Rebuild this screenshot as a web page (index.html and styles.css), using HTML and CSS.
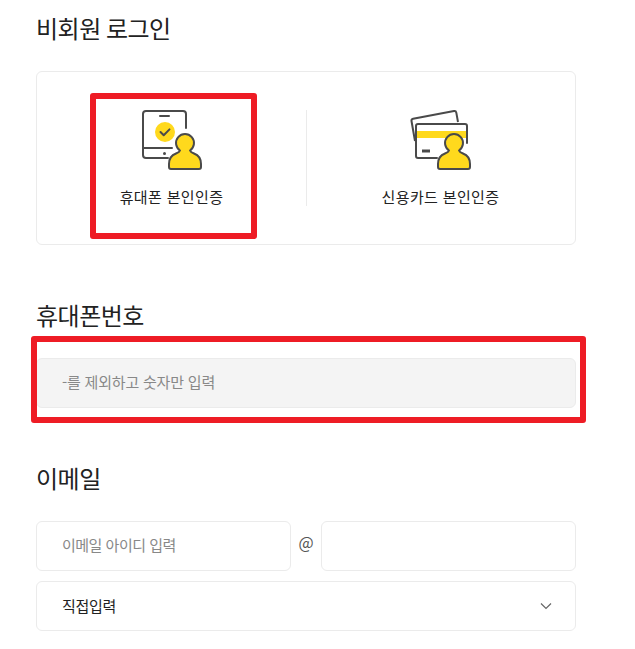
FILE: index.html
```html
<!DOCTYPE html>
<html lang="ko">
  <head>
    <meta charset="UTF-8" />
    <meta name="viewport" content="width=device-width, initial-scale=1.0" />
    <title>비회원 로그인</title>
    <link rel="stylesheet" href="styles.css">
  </head>
  <body>
    <div class="container">
      <h2 class="title title-login">비회원 로그인</h2>
      <div class="auth-card">
        <div class="auth-item">
          <svg class="auth-icon" width="64" height="64" viewBox="0 0 64 64" fill="none">
            <path d="M45 19V5a3 3 0 0 0-3-3H5a3 3 0 0 0-3 3v41a3 3 0 0 0 3 3h22M2 39h29M19 7h9" stroke="#4a4a4a" stroke-width="2" stroke-linecap="round"/>
            <circle cx="24" cy="23" r="10" fill="#ffd91d"/>
            <path d="M19.500 23l3.200 3.200 5.800-5.800" stroke="#4a4a4a" stroke-width="2" stroke-linecap="round" stroke-linejoin="round"/>
            <circle cx="23.500" cy="44.500" r="1.500" fill="#4a4a4a"/>
            <path d="M28 58v-3c0-6 3-9 7-10.500 2-.8 3.500-1.500 4-3A9 9 0 1 1 49 41.500c.5 1.500 2 2.200 4 3 4 1.500 7 4.500 7 10.500v3a2 2 0 0 1-2 2H30a2 2 0 0 1-2-2z" fill="#ffd91d" stroke="#4a4a4a" stroke-width="2" stroke-linejoin="round"/>
          </svg>
          <span class="auth-label">휴대폰 본인인증</span>
        </div>
        <div class="auth-item auth-item-card">
          <svg class="auth-icon" width="64" height="64" viewBox="0 0 64 64" fill="none">
            <path d="M5 32L1.500 12a2 2 0 0 1 1.600-2.300L44 2a2 2 0 0 1 2.300 1.600L48 13" stroke="#4a4a4a" stroke-width="2" stroke-linejoin="round"/>
            <rect x="6" y="22" width="51" height="7" fill="#ffd91d"/>
            <path d="M27 49H8a2 2 0 0 1-2-2V17a2 2 0 0 1 2-2h47a2 2 0 0 1 2 2v17" stroke="#4a4a4a" stroke-width="2" stroke-linecap="round"/>
            <path d="M12 42h8" stroke="#4a4a4a" stroke-width="3"/>
            <path d="M28 58v-3c0-6 3-9 7-10.500 2-.8 3.500-1.500 4-3A9 9 0 1 1 49 41.500c.5 1.500 2 2.200 4 3 4 1.500 7 4.500 7 10.500v3a2 2 0 0 1-2 2H30a2 2 0 0 1-2-2z" fill="#ffd91d" stroke="#4a4a4a" stroke-width="2" stroke-linejoin="round"/>
          </svg>
          <span class="auth-label">신용카드 본인인증</span>
        </div>
        <div class="mark mark-phone"></div>
      </div>

      <div class="phone-field">
        <h2 class="title title-phone">휴대폰번호</h2>
        <div class="field field-gray">-를 제외하고 숫자만 입력</div>
        <div class="mark mark-input"></div>
      </div>

      <h2 class="title title-email">이메일</h2>
      <div class="email-row">
        <div class="field">이메일 아이디 입력</div>
        <span class="at">@</span>
        <div class="field"></div>
      </div>
      <div class="field field-select">
        <span>직접입력</span>
        <svg width="12" height="8" viewBox="0 0 12 8" fill="none">
          <path d="M1 1.500l5 5 5-5" stroke="#666" stroke-width="1.200"/>
        </svg>
      </div>
    </div>
  </body>
</html>
```

FILE: styles.css
```css
* {
  box-sizing: border-box;
}

body {
  margin: 0;
  background: #fff;
  color: #222;
  font-family: "Noto Sans CJK KR", "Noto Sans", sans-serif;
}

.container {
  width: 540px;
  margin-left: 36px;
}

.title {
  margin: 0;
  font-size: 24px;
  font-weight: 400;
  line-height: 34px;
  letter-spacing: -0.5px;
  word-spacing: -1px;
}

.title-login {
  padding-top: 11px;
  margin-bottom: 26px;
}

.title-phone {
  margin-bottom: 26px;
}

.title-email {
  margin-top: 53px;
  margin-bottom: 26px;
}

.auth-card {
  position: relative;
  display: flex;
  height: 174px;
  margin-bottom: 53px;
  border: 1px solid #ebebeb;
  border-radius: 6px;
}

.auth-item {
  display: flex;
  flex: 1;
  flex-direction: column;
  align-items: center;
  padding-top: 37px;
}

.auth-item-card {
  position: relative;
}

.auth-item-card::before {
  content: "";
  position: absolute;
  left: 0;
  top: 38px;
  width: 1px;
  height: 96px;
  background: #ebebeb;
}

.auth-icon {
  display: block;
  margin-left: 3px;
}

.auth-label {
  margin-top: 13px;
  font-size: 15px;
  line-height: 22px;
  letter-spacing: 0.35px;
}

.mark {
  position: absolute;
  border: 6px solid #ee1c25;
  border-radius: 3px;
  pointer-events: none;
}

.mark-phone {
  left: 53px;
  top: 21px;
  width: 167px;
  height: 146px;
}

.phone-field {
  position: relative;
}

.mark-input {
  left: -5px;
  top: 38px;
  width: 555px;
  height: 87px;
}

.field {
  display: flex;
  align-items: center;
  height: 50px;
  padding: 0 25px 3px;
  border: 1px solid #ebebeb;
  border-radius: 6px;
  color: #888;
  font-size: 15px;
  letter-spacing: -0.5px;
}

.field-gray {
  padding-bottom: 4px;
  background: #f4f4f4;
  letter-spacing: -0.2px;
}

.email-row {
  display: grid;
  grid-template-columns: 255px 1fr 255px;
  align-items: center;
  margin-bottom: 10px;
}

.at {
  margin-top: -8px;
  color: #555;
  font-size: 16px;
  text-align: center;
}

.field-select {
  justify-content: space-between;
  padding-right: 23px;
  padding-bottom: 1px;
  color: #222;
  letter-spacing: -0.3px;
}
```
